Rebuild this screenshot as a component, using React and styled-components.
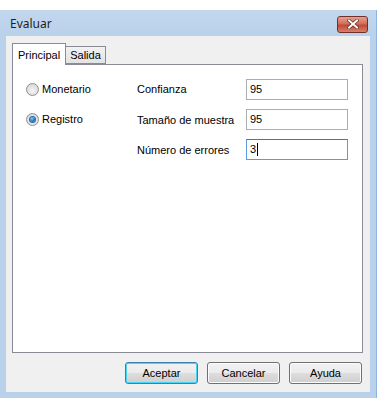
import React from 'react';
import styled, { createGlobalStyle } from 'styled-components';

const GlobalStyle = createGlobalStyle`
  body {
    margin: 0;
    background: #ffffff;
    font-family: "Liberation Sans", Arial, sans-serif;
    font-size: 11px;
    color: #000;
  }
`;

const Window = styled.div`
  margin-top: 10px;
  width: 377px;
  height: 388px;
  box-sizing: border-box;
  background: linear-gradient(180deg, #c3d7ee 0px, #b9d1ea 26px, #b9d1ea 100%);
  border-right: 1px solid #8fb6e0;
  padding: 0 6px 6px 6px;
  display: flex;
  flex-direction: column;
`;

const TitleBar = styled.div`
  height: 26px;
  display: flex;
  align-items: center;
  justify-content: space-between;
  padding-left: 4px;
`;

const Title = styled.span`
  font-family: "Noto Sans", "Liberation Sans", sans-serif;
  font-size: 12px;
  color: #1e1e1e;
`;

const CloseButton = styled.div`
  width: 31px;
  height: 17px;
  margin-right: 2px;
  margin-top: 2px;
  box-sizing: border-box;
  border: 1px solid #6e3028;
  border-radius: 3px;
  background: linear-gradient(180deg, #e8a090 0%, #d26e5c 45%, #c04a36 55%, #d8806c 100%);
  display: flex;
  align-items: center;
  justify-content: center;
`;

const Client = styled.div`
  flex: 1;
  background: #f0f0f0;
  padding: 7px 7px 8px 6px;
  display: flex;
  flex-direction: column;
`;

const TabStrip = styled.div`
  display: flex;
  align-items: flex-end;
  height: 21px;
  position: relative;
  z-index: 1;
`;

const Tab = styled.div`
  box-sizing: border-box;
  height: ${p => (p.$active ? '22px' : '18px')};
  margin-bottom: ${p => (p.$active ? '-1px' : '0')};
  padding: 0 ${p => (p.$active ? '5px' : '4px')};
  border: 1px solid #898c95;
  border-bottom: ${p => (p.$active ? 'none' : '1px solid #898c95')};
  border-left: ${p => (p.$active ? '1px solid #898c95' : 'none')};
  background: ${p => (p.$active ? '#ffffff' : 'linear-gradient(180deg, #f2f2f2 0%, #e3e3e3 100%)')};
  display: flex;
  align-items: center;
`;

const Panel = styled.div`
  flex: 1;
  background: #ffffff;
  border: 1px solid #898c95;
  padding: 9px 0 0 14px;
  display: grid;
  grid-template-columns: 110px 109px 102px;
  grid-auto-rows: 30px;
  align-items: center;
  align-content: start;
`;

const RadioItem = styled.div`
  display: flex;
  align-items: center;
  gap: 3px;
  margin-left: -1px;
`;

const RadioCircle = styled.span`
  width: 13px;
  height: 13px;
  box-sizing: border-box;
  border-radius: 50%;
  border: 1px solid #8e8f8f;
  background: radial-gradient(circle at 50% 60%, #f4f4f4 0%, #dcdcdc 70%, #cfcfcf 100%);
  display: flex;
  align-items: center;
  justify-content: center;
`;

const RadioDot = styled.span`
  width: 5px;
  height: 5px;
  border-radius: 50%;
  background: radial-gradient(circle at 40% 35%, #8cc8f4 0%, #1b6fbf 60%, #0c4f8e 100%);
  box-shadow: 0 0 0 1px #276aa8;
`;

const Label = styled.span`
  padding-top: ${p => p.$shift || 0}px;
`;

const Field = styled.div`
  height: 21px;
  box-sizing: border-box;
  border: 1px solid ${p => (p.$focused ? '#569de5' : '#abadb3')};
  border-top-color: ${p => (p.$focused ? '#3d7bad' : '#abadb3')};
  background: #fff;
  padding: 0 3px;
  display: flex;
  align-items: center;
  font-size: 11px;
`;

const Caret = styled.span`
  display: inline-block;
  width: 1px;
  height: 13px;
  background: #000;
  margin-left: 1px;
`;

const ButtonRow = styled.div`
  display: flex;
  justify-content: flex-end;
  gap: 9px;
  padding-top: 9px;
  padding-right: 1px;
`;

const Button = styled.div`
  width: 73px;
  height: 22px;
  box-sizing: border-box;
  border: 1px solid ${p => (p.$default ? '#3c7fb1' : '#707070')};
  border-radius: 3px;
  background: linear-gradient(180deg, #f2f2f2 0%, #ebebeb 48%, #dddddd 52%, #cfcfcf 100%);
  box-shadow: inset 0 0 0 1px ${p => (p.$default ? '#48d4f7' : '#fcfcfc')};
  display: flex;
  align-items: center;
  justify-content: center;
  font-size: 11px;
`;

const fields = [
  { option: 'Monetario', checked: false, label: 'Confianza', value: '95' },
  { option: 'Registro', checked: true, label: 'Tamaño de muestra', value: '95' },
  { option: null, label: 'Número de errores', value: '3', focused: true },
];

export default function App() {
  return (
    <>
      <GlobalStyle />
      <Window>
        <TitleBar>
          <Title>Evaluar</Title>
          <CloseButton>
            <svg width="12" height="10" viewBox="0 0 12 10">
              <path d="M2 1.5 L10 8.5 M10 1.5 L2 8.5" stroke="#5a2a22" strokeWidth="3.4" strokeLinecap="square" />
              <path d="M2 1.5 L10 8.5 M10 1.5 L2 8.5" stroke="#ffffff" strokeWidth="2" strokeLinecap="square" />
            </svg>
          </CloseButton>
        </TitleBar>
        <Client>
          <TabStrip>
            <Tab $active>Principal</Tab>
            <Tab>Salida</Tab>
          </TabStrip>
          <Panel>
            {fields.map((f, i) => (
              <React.Fragment key={f.label}>
                {f.option ? (
                  <RadioItem>
                    <RadioCircle>{f.checked && <RadioDot />}</RadioCircle>
                    {f.option}
                  </RadioItem>
                ) : (
                  <span />
                )}
                <Label $shift={i > 0 ? 2 : 0}>{f.label}</Label>
                <Field $focused={f.focused}>
                  {f.value}
                  {f.focused && <Caret />}
                </Field>
              </React.Fragment>
            ))}
          </Panel>
          <ButtonRow>
            <Button $default>Aceptar</Button>
            <Button>Cancelar</Button>
            <Button>Ayuda</Button>
          </ButtonRow>
        </Client>
      </Window>
    </>
  );
}
